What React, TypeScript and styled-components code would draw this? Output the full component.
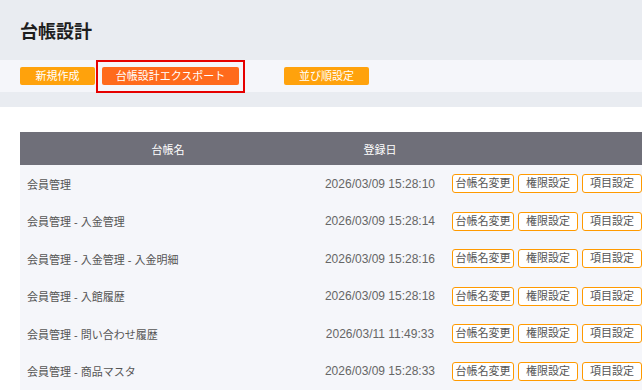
import styled, { createGlobalStyle } from "styled-components"

interface Ledger {
  name: string
  createdAt: string
}

const ledgers: Ledger[] = [
  { name: "会員管理", createdAt: "2026/03/09 15:28:10" },
  { name: "会員管理 - 入金管理", createdAt: "2026/03/09 15:28:14" },
  { name: "会員管理 - 入金管理 - 入金明細", createdAt: "2026/03/09 15:28:16" },
  { name: "会員管理 - 入館履歴", createdAt: "2026/03/09 15:28:18" },
  { name: "会員管理 - 問い合わせ履歴", createdAt: "2026/03/11 11:49:33" },
  { name: "会員管理 - 商品マスタ", createdAt: "2026/03/09 15:28:33" },
]

const App = () => {
  return (
    <Page>
      <GlobalStyle />
      <Header>
        <Title>台帳設計</Title>
      </Header>
      <Toolbar>
        <ToolButton $width={75}>新規作成</ToolButton>
        <Highlight>
          <ToolButton $width={137} $variant="accent">
            台帳設計エクスポート
          </ToolButton>
        </Highlight>
        <ToolButton $width={85} style={{ marginLeft: 39 }}>
          並び順設定
        </ToolButton>
      </Toolbar>
      <Spacer />
      <Content>
        <Table>
          <HeadRow>
            <HeadCell>台帳名</HeadCell>
            <HeadCell>登録日</HeadCell>
            <HeadCell />
          </HeadRow>
          {ledgers.map(ledger => (
            <Row key={ledger.name}>
              <NameCell>{ledger.name}</NameCell>
              <DateCell>{ledger.createdAt}</DateCell>
              <Actions>
                <RowButton $width={62}>台帳名変更</RowButton>
                <RowButton $width={60}>権限設定</RowButton>
                <RowButton $width={60}>項目設定</RowButton>
              </Actions>
            </Row>
          ))}
        </Table>
      </Content>
    </Page>
  )
}

export default App

const GlobalStyle = createGlobalStyle`
  html, body {
    margin: 0;
    padding: 0;
    overflow: hidden;
    background: #fff;
  }
  body {
    font-family: "Liberation Sans", "Noto Sans CJK JP", sans-serif;
  }
  button {
    font-family: inherit;
  }
`
const Page = styled.div`
  width: 642px;
  height: 392px;
  overflow: hidden;
`
const Header = styled.header`
  height: 60px;
  background: #e9ecf1;
  display: flex;
  align-items: center;
  padding-left: 20px;
`
const Title = styled.h1`
  margin: 0;
  font-size: 18px;
  font-weight: 700;
  color: #1e1e1e;
`
const Toolbar = styled.div`
  height: 32px;
  background: #f5f6fa;
  display: flex;
  align-items: center;
  padding-left: 20px;
`
const ToolButton = styled.button<{ $width: number; $variant?: "accent" }>`
  width: ${p => p.$width}px;
  height: 18px;
  padding: 0;
  border: none;
  border-radius: 2px;
  background: ${p => (p.$variant === "accent" ? "#ff6a1c" : "#ffa20c")};
  color: #fff;
  font-size: 11px;
  line-height: 18px;
  cursor: pointer;
`
const Highlight = styled.div`
  margin-left: 1px;
  padding: 5px 4px 6px;
  border: 2px solid #e60000;
  display: flex;
`
const Spacer = styled.div`
  height: 15px;
  background: #e9ecf1;
`
const Content = styled.div`
  padding: 25px 0 0 20px;
`
const Table = styled.div`
  width: 760px;
`
const HeadRow = styled.div`
  display: grid;
  grid-template-columns: 296px 128px 1fr;
  height: 33px;
  background: #6f6f79;
`
const HeadCell = styled.div`
  display: flex;
  align-items: center;
  justify-content: center;
  color: #fff;
  font-size: 11px;
`
const Row = styled.div`
  display: grid;
  grid-template-columns: 296px 128px 1fr;
  height: 37.5px;
  background: #f5f6fa;
  align-items: center;
  color: #555;
  font-size: 12px;
`
const NameCell = styled.div`
  padding-left: 7px;
  font-size: 11px;
`
const DateCell = styled.div`
  text-align: center;
  color: #666;
`
const Actions = styled.div`
  display: flex;
  gap: 4px;
  padding-left: 8px;
`
const RowButton = styled.button<{ $width: number }>`
  width: ${p => p.$width}px;
  height: 19px;
  padding: 0;
  border: 1px solid #ff9a00;
  border-radius: 3px;
  background: #fff;
  color: #555;
  font-size: 11px;
  line-height: 17px;
  cursor: pointer;
`
